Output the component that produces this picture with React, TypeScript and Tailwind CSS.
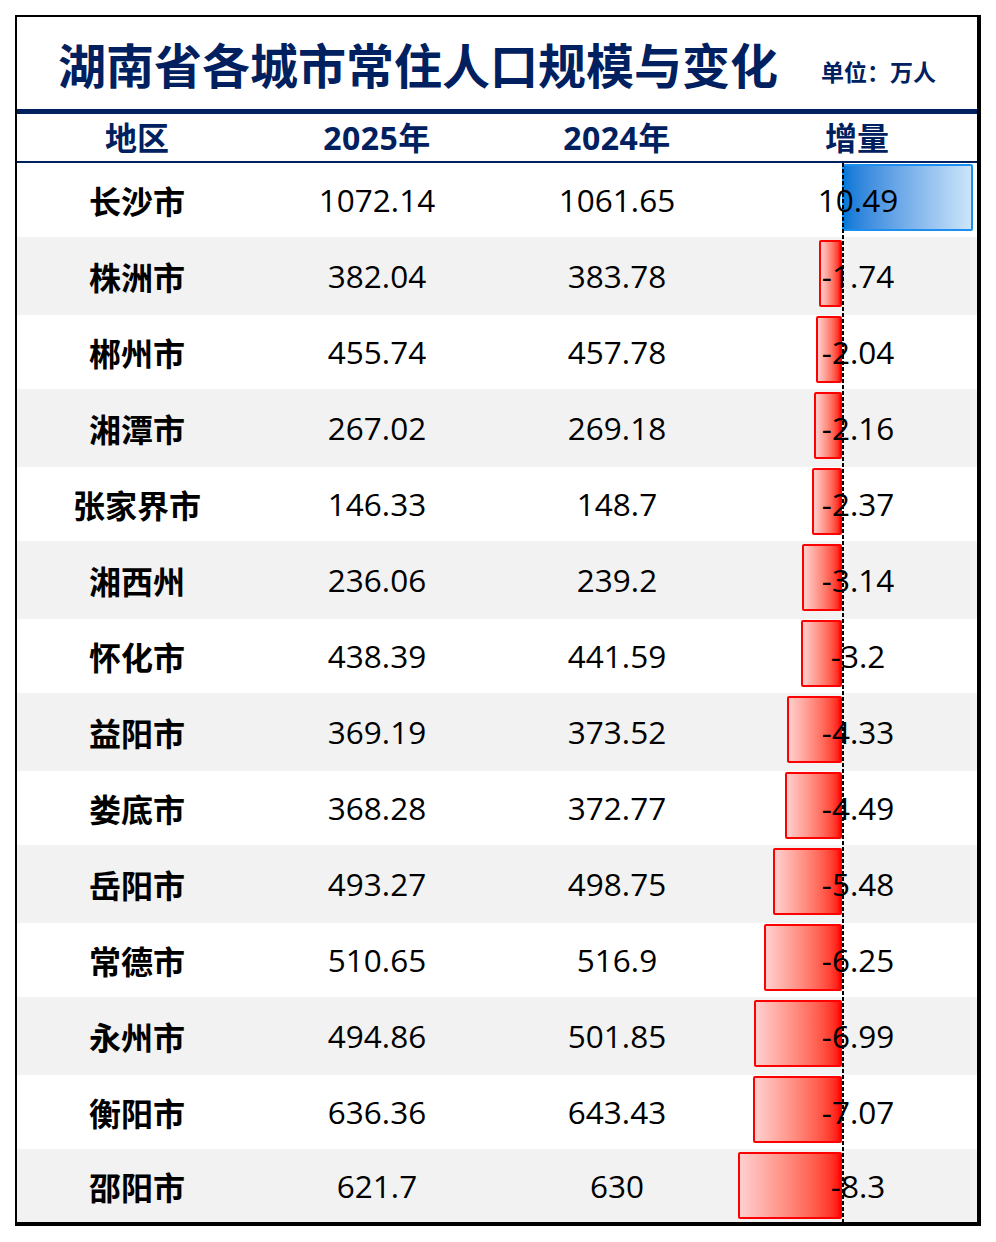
import React from 'react'

interface Row {
  name: string
  y2025: string
  y2024: string
  diff: number
}

const rows: Row[] = [
  { name: '长沙市', y2025: '1072.14', y2024: '1061.65', diff: 10.49 },
  { name: '株洲市', y2025: '382.04', y2024: '383.78', diff: -1.74 },
  { name: '郴州市', y2025: '455.74', y2024: '457.78', diff: -2.04 },
  { name: '湘潭市', y2025: '267.02', y2024: '269.18', diff: -2.16 },
  { name: '张家界市', y2025: '146.33', y2024: '148.7', diff: -2.37 },
  { name: '湘西州', y2025: '236.06', y2024: '239.2', diff: -3.14 },
  { name: '怀化市', y2025: '438.39', y2024: '441.59', diff: -3.2 },
  { name: '益阳市', y2025: '369.19', y2024: '373.52', diff: -4.33 },
  { name: '娄底市', y2025: '368.28', y2024: '372.77', diff: -4.49 },
  { name: '岳阳市', y2025: '493.27', y2024: '498.75', diff: -5.48 },
  { name: '常德市', y2025: '510.65', y2024: '516.9', diff: -6.25 },
  { name: '永州市', y2025: '494.86', y2024: '501.85', diff: -6.99 },
  { name: '衡阳市', y2025: '636.36', y2024: '643.43', diff: -7.07 },
  { name: '邵阳市', y2025: '621.7', y2024: '630', diff: -8.3 },
]

const SCALE = 12.4
const cjk = "font-['Noto_Sans_CJK_SC',sans-serif]"
const num = "font-['Open_Sans','Noto_Sans_CJK_SC',sans-serif]"

const App = () => {
  return (
    <div className="min-h-screen bg-white pt-[15px] pl-[15px]">
      <div className="w-[966px] border-l-2 border-t-2 border-r-4 border-b-4 border-black bg-white">
        {/* title */}
        <div className="h-[92px] flex items-center pl-[41px]">
          <h1 className={`${cjk} text-[48px] leading-none font-bold text-[#002060]`}>湖南省各城市常住人口规模与变化</h1>
          <span className={`${cjk} ml-[43px] mt-[16px] text-[23px] leading-none font-bold text-[#002060]`}>单位：万人</span>
        </div>
        <div className="h-[5px] bg-[#002060]" />

        {/* header */}
        <div className={`${num} grid grid-cols-4 h-[49px] border-b-2 border-[#002060] text-[32px] font-bold text-[#002060]`}>
          <div className="flex items-center justify-center">地区</div>
          <div className="flex items-center justify-center tracking-[0.5px]">2025年</div>
          <div className="flex items-center justify-center tracking-[0.5px]">2024年</div>
          <div className="flex items-center justify-center">增量</div>
        </div>

        {/* body */}
        <div className="relative flex flex-col">
          {rows.map((r, i) => {
            const w = Math.abs(r.diff) * SCALE + 1
            const gray = i % 2 === 1
            const last = i === rows.length - 1
            return (
              <div
                key={r.name}
                className={`grid grid-cols-4 ${gray ? 'bg-[#f2f2f2]' : 'bg-white'} ${last ? 'h-[73px]' : gray ? 'h-[78px]' : 'h-[74px]'}`}
              >
                <div className={`${cjk} flex items-center justify-center text-[32px] font-bold text-black`}>{r.name}</div>
                <div className={`${num} flex items-center justify-center text-[31.5px] text-black`}>{r.y2025}</div>
                <div className={`${num} flex items-center justify-center text-[31.5px] text-black`}>{r.y2024}</div>
                <div className={`relative flex items-start ${gray ? 'pt-[3px]' : 'pt-[1px]'}`}>
                  <div className="w-[105px] flex justify-end">
                    {r.diff < 0 && (
                      <div
                        className="h-[67px] border-2 border-[#ff0000] rounded-[2px] bg-linear-to-r from-[#ffcfcf] to-[#ff0000]"
                        style={{ width: w }}
                      />
                    )}
                  </div>
                  <div className="flex-1 flex justify-start">
                    {r.diff > 0 && (
                      <div
                        className="h-[67px] border-2 border-[#1c8ef0] rounded-[2px] bg-linear-to-r from-[#0078d7] to-[#cde5f9]"
                        style={{ width: w }}
                      />
                    )}
                  </div>
                  <div className={`${num} absolute inset-0 flex items-center justify-center pl-[2px] text-[31.5px] text-black`}>
                    {r.diff}
                  </div>
                </div>
              </div>
            )
          })}
          {/* zero axis */}
          <div className="absolute top-0 bottom-0 left-[825px] w-[2px] bg-[repeating-linear-gradient(to_bottom,#000_0_4px,transparent_4px_6px)]" />
        </div>
      </div>
    </div>
  )
}

export default App
